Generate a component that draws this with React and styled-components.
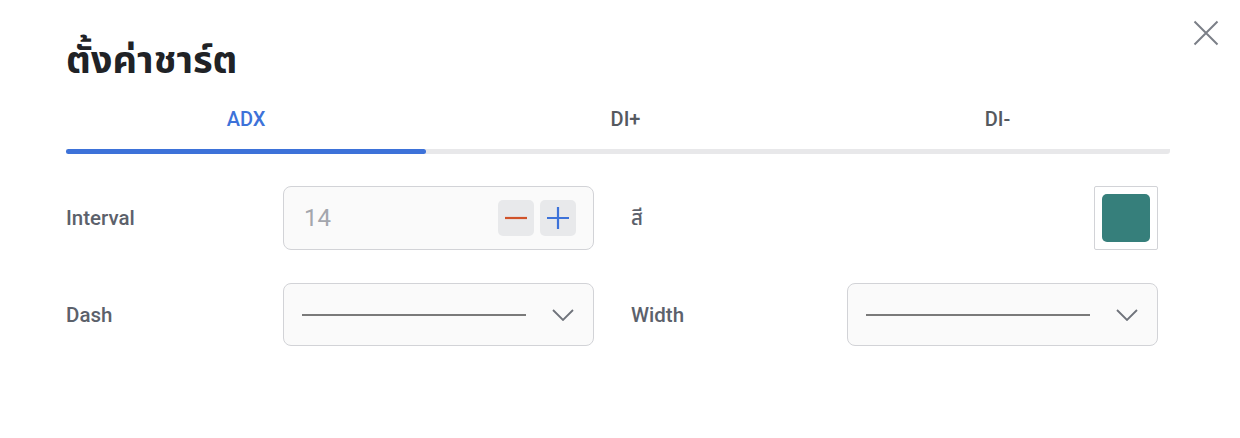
import React from "react";
import styled, { createGlobalStyle } from "styled-components";

const Global = createGlobalStyle`
  html, body { margin: 0; padding: 0; background: #fff; }
  body { font-family: Roboto, "Noto Sans Thai", "Noto Sans", sans-serif; }
`;

const Dialog = styled.div`
  position: relative;
  width: 1240px;
  height: 438px;
  box-sizing: border-box;
  padding: 34px 70px 0 66px;
  background: #fff;
`;

const Title = styled.h1`
  margin: 0;
  font-size: 38px;
  line-height: 52px;
  font-weight: 700;
  color: #202226;
`;

const Close = styled.button`
  position: absolute;
  top: 17px;
  right: 18px;
  width: 32px;
  height: 32px;
  padding: 0;
  border: 0;
  background: none;
  display: flex;
  align-items: center;
  justify-content: center;
  cursor: pointer;
`;

const Tabs = styled.div`
  display: grid;
  grid-template-columns: 360px 399px 345px;
  margin-top: 20px;
`;

const Tab = styled.div`
  text-align: center;
  font-size: 20px;
  font-weight: 500;
  line-height: 26px;
  color: ${(p) => (p.$active ? "#3d72d9" : "#55595f")};
  padding-bottom: 17px;
  border-bottom: 5px solid #e8e8ea;
  position: relative;
  &::after {
    content: "";
    display: ${(p) => (p.$active ? "block" : "none")};
    position: absolute;
    left: 0;
    right: 0;
    bottom: -5px;
    height: 5px;
    border-radius: 3px;
    background: #3d72d9;
  }
  &:first-child { border-radius: 3px 0 0 3px; }
  &:last-child { border-radius: 0 3px 3px 0; }
`;

const Form = styled.div`
  display: grid;
  grid-template-columns: 217px 311px 253px 311px;
  row-gap: 33px;
  margin-top: 32px;
`;

const Label = styled.div`
  display: flex;
  align-items: center;
  font-size: 20.5px;
  font-weight: 500;
  color: #5c616b;
  ${(p) => p.$right && "padding-left: 37px;"}
`;

const Field = styled.div`
  height: 64px;
  box-sizing: border-box;
  border: 1px solid #d2d3d7;
  border-radius: 8px;
  background: #fafafa;
  display: flex;
  align-items: center;
  padding: 0 17px 0 20px;
`;

const NumberText = styled.span`
  flex: 1;
  font-size: 24px;
  color: #a3a6ad;
`;

const StepBtn = styled.button`
  width: 36px;
  height: 36px;
  border: 0;
  border-radius: 5px;
  background: #e8e9eb;
  margin-left: 6px;
  padding: 0;
  display: flex;
  align-items: center;
  justify-content: center;
`;

const SwatchCell = styled.div`
  display: flex;
  justify-content: flex-end;
  align-items: center;
`;

const SwatchBox = styled.div`
  width: 64px;
  height: 64px;
  box-sizing: border-box;
  border: 1px solid #d2d3d7;
  border-radius: 2px;
  display: flex;
  align-items: center;
  justify-content: center;
`;

const Swatch = styled.div`
  width: 48px;
  height: 48px;
  border-radius: 5px;
  background: #367f7b;
`;

const Select = styled.div`
  height: 63px;
  box-sizing: border-box;
  border: 1px solid #d2d3d7;
  border-radius: 8px;
  background: #fafafa;
  display: flex;
  align-items: center;
  padding: 0 19px 0 18px;
  gap: 26px;
`;

const LinePreview = styled.div`
  flex: 1;
  height: 2px;
  background: #7a7a7a;
`;

const Chevron = () => (
  <svg width="22" height="12" viewBox="0 0 22 12" fill="none">
    <path d="M1 1l10 10L21 1" stroke="#6f737b" strokeWidth="1.8" />
  </svg>
);

export default function App() {
  return (
    <>
      <Global />
      <Dialog>
        <Title>ตั้งค่าชาร์ต</Title>
        <Close aria-label="close">
          <svg width="26" height="26" viewBox="0 0 26 26">
            <path d="M1.5 1.5l23 23M24.5 1.5l-23 23" stroke="#7b7f87" strokeWidth="2" />
          </svg>
        </Close>
        <Tabs>
          <Tab $active>ADX</Tab>
          <Tab>DI+</Tab>
          <Tab>DI-</Tab>
        </Tabs>
        <Form>
          <Label>Interval</Label>
          <Field>
            <NumberText>14</NumberText>
            <StepBtn aria-label="decrease">
              <svg width="22" height="22" viewBox="0 0 22 22">
                <path d="M0 11h22" stroke="#d0532a" strokeWidth="2.2" />
              </svg>
            </StepBtn>
            <StepBtn aria-label="increase">
              <svg width="22" height="22" viewBox="0 0 22 22">
                <path d="M0 11h22M11 0v22" stroke="#3d72d9" strokeWidth="2.2" />
              </svg>
            </StepBtn>
          </Field>
          <Label $right>สี</Label>
          <SwatchCell>
            <SwatchBox>
              <Swatch />
            </SwatchBox>
          </SwatchCell>
          <Label>Dash</Label>
          <Select>
            <LinePreview />
            <Chevron />
          </Select>
          <Label $right>Width</Label>
          <Select>
            <LinePreview />
            <Chevron />
          </Select>
        </Form>
      </Dialog>
    </>
  );
}
